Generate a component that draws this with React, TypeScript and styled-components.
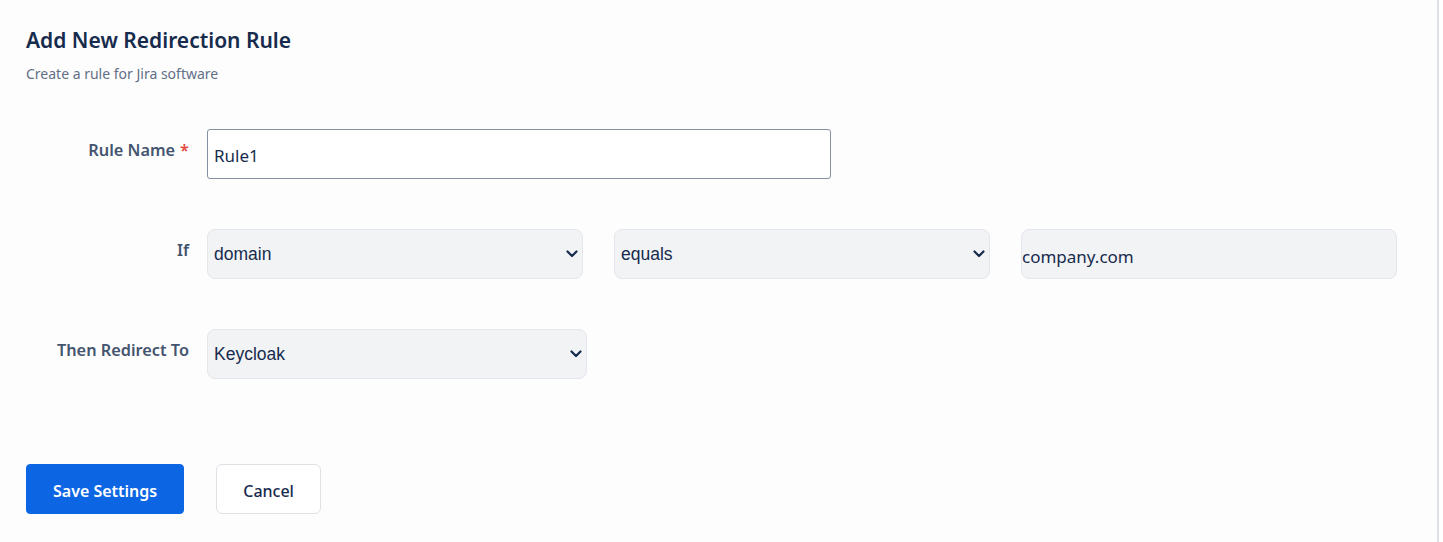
import { FC } from 'react';
import styled, { createGlobalStyle } from 'styled-components';

const GlobalStyle = createGlobalStyle`
  body {
    margin: 0;
    background: #ffffff;
    font-family: 'Noto Sans', 'Open Sans', sans-serif;
  }
`;

const Page = styled.div`
  box-sizing: border-box;
  width: 1439px;
  min-height: 542px;
  padding: 25px 26px;
  background: #fdfdfd;
  border-right: 2px solid #dde0e4;
`;

const Title = styled.h2`
  margin: 0;
  font-size: 21px;
  line-height: 30px;
  font-weight: 600;
  color: #172b4d;
`;

const Subtitle = styled.p`
  margin: 9px 0 0;
  font-size: 14px;
  line-height: 20px;
  color: #626f86;
`;

const Form = styled.form`
  display: grid;
  grid-template-columns: 163px 1fr;
  column-gap: 18px;
  row-gap: 50px;
  margin-top: 45px;
`;

const Label = styled.label`
  justify-self: end;
  padding-top: 9px;
  font-size: 16.3px;
  line-height: 24px;
  font-weight: 600;
  color: #44546f;
  white-space: nowrap;
`;

const Required = styled.span`
  margin-left: 5px;
  color: #e2483d;
`;

const Fields = styled.div`
  display: flex;
  gap: 31px;
`;

const TextInput = styled.input<{ $w: number }>`
  box-sizing: border-box;
  width: ${(p) => p.$w}px;
  height: 50px;
  padding: 2px 6px 0;
  border: 1px solid #8590a2;
  border-radius: 3px;
  background: #ffffff;
  font-family: 'Noto Sans', sans-serif;
  font-size: 17px;
  color: #172b4d;
  outline: none;
`;

const FilledInput = styled(TextInput)`
  padding: 4px 0 0;
  border: 1px solid #e3e6ea;
  border-radius: 8px;
  background: #f1f3f5;
`;

const SelectWrap = styled.div<{ $w: number }>`
  position: relative;
  width: ${(p) => p.$w}px;
  height: 50px;
`;

const Select = styled.select`
  box-sizing: border-box;
  width: 100%;
  height: 100%;
  padding: 0 6px;
  appearance: none;
  border: 1px solid #e3e6ea;
  border-radius: 8px;
  background: #f1f3f5;
  font-family: 'Liberation Sans', Arial, sans-serif;
  font-size: 17.5px;
  color: #172b4d;
  outline: none;
`;

const Chevron = styled.svg`
  position: absolute;
  right: 5px;
  top: 21px;
  pointer-events: none;
`;

const Actions = styled.div`
  display: flex;
  gap: 32px;
  margin-top: 85px;
`;

const Button = styled.button<{ $primary?: boolean }>`
  box-sizing: border-box;
  height: 50px;
  padding: 3px 26px 0;
  border-radius: ${(p) => (p.$primary ? 4 : 6)}px;
  border: 1px solid ${(p) => (p.$primary ? '#0c66e4' : '#dfe1e6')};
  background: ${(p) => (p.$primary ? '#0c66e4' : '#ffffff')};
  color: ${(p) => (p.$primary ? '#ffffff' : '#172b4d')};
  font-family: 'Noto Sans', sans-serif;
  font-size: 16px;
  font-weight: ${(p) => (p.$primary ? 600 : 500)};
  cursor: pointer;
`;

interface ISelectField {
  width: number;
  value: string;
  options: string[];
}

const SelectField: FC<ISelectField> = ({ width, value, options }) => (
  <SelectWrap $w={width}>
    <Select defaultValue={value}>
      {options.map((o) => (
        <option key={o} value={o}>
          {o}
        </option>
      ))}
    </Select>
    <Chevron width="12" height="8" viewBox="0 0 12 8">
      <path
        d="M1.5 1.5L6 6L10.5 1.5"
        fill="none"
        stroke="#172b4d"
        strokeWidth="2.2"
        strokeLinecap="round"
        strokeLinejoin="round"
      />
    </Chevron>
  </SelectWrap>
);

const App: FC = () => {
  return (
    <>
      <GlobalStyle />
      <Page>
        <Title>Add New Redirection Rule</Title>
        <Subtitle>Create a rule for Jira software</Subtitle>
        <Form onSubmit={(e) => e.preventDefault()}>
          <Label>
            Rule Name<Required>*</Required>
          </Label>
          <Fields>
            <TextInput $w={624} defaultValue="Rule1" />
          </Fields>

          <Label>If</Label>
          <Fields>
            <SelectField width={376} value="domain" options={['domain', 'group', 'directory']} />
            <SelectField width={376} value="equals" options={['equals', 'contains', 'starts with']} />
            <FilledInput $w={376} defaultValue="company.com" />
          </Fields>

          <Label>Then Redirect To</Label>
          <Fields>
            <SelectField width={380} value="Keycloak" options={['Keycloak', 'Okta', 'Azure AD']} />
          </Fields>
        </Form>
        <Actions>
          <Button type="submit" $primary>
            Save Settings
          </Button>
          <Button type="button">Cancel</Button>
        </Actions>
      </Page>
    </>
  );
};

export default App;
